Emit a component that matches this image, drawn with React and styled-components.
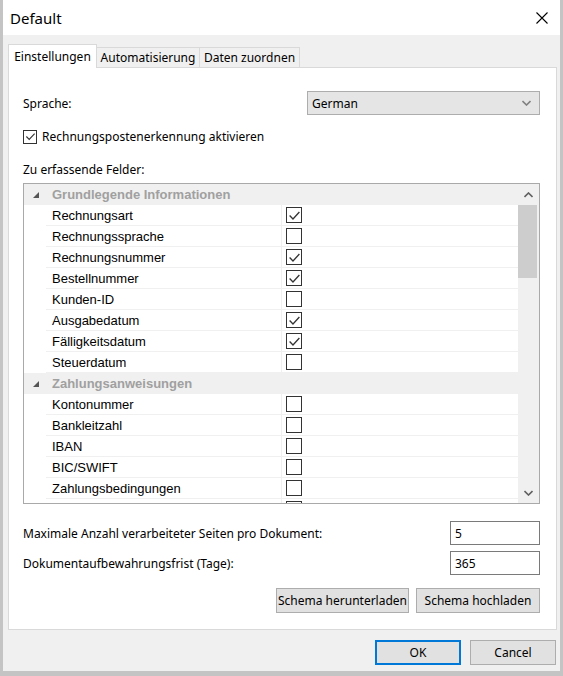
import React from 'react'
import styled, { createGlobalStyle } from 'styled-components'

const GlobalStyle = createGlobalStyle`
  html, body { margin: 0; padding: 0; background: #c4c4c4; }
  body {
    font-family: "Noto Sans", "Open Sans", sans-serif;
    font-size: 12px;
    color: #000;
  }
  * { box-sizing: border-box; }
`

const LIST = `"Liberation Sans", Arial, sans-serif`

const Window = styled.div`
  width: 563px;
  height: 676px;
  display: flex;
  flex-direction: column;
  background: #f0f0f0;
  border: 3px solid #c4c4c4;
  border-top: 0;
  border-bottom-width: 5px;
`

const TitleBar = styled.div`
  height: 35px;
  background: #fff;
  display: flex;
  align-items: center;
  justify-content: space-between;
  padding: 0 12px 0 7px;
  font-size: 15px;
`

const CloseIcon = () => (
  <svg width="12" height="12" viewBox="0 0 12 12">
    <path d="M0.5 0.5 L11.5 11.5 M11.5 0.5 L0.5 11.5" stroke="#000" strokeWidth="1.1" />
  </svg>
)

const Body = styled.div`
  flex: 1;
  display: flex;
  flex-direction: column;
  padding: 9px 0 0 5px;
`

const TabStrip = styled.div`
  display: flex;
  align-items: flex-end;
  height: 24px;
  position: relative;
  z-index: 1;
  margin-bottom: -1px;
`

const Tab = styled.div`
  width: ${p => p.$w}px;
  height: ${p => (p.$active ? 24 : 21)}px;
  display: flex;
  align-items: center;
  justify-content: center;
  white-space: nowrap;
  background: ${p => (p.$active ? '#fff' : '#f0f0f0')};
  border: 1px solid #d9d9d9;
  border-bottom: ${p => (p.$active ? '0' : '1px solid #d9d9d9')};
  margin-left: ${p => (p.$active ? 0 : -1)}px;
  &:first-child { margin-left: 0; }
`

const Panel = styled.div`
  width: 549px;
  height: 563px;
  background: #fff;
  border: 1px solid #d9d9d9;
  padding: 23px 16px 0 14px;
  display: flex;
  flex-direction: column;
`

const FieldRow = styled.div`
  display: flex;
  align-items: center;
  justify-content: space-between;
  height: 24px;
  margin-top: ${p => p.$mt || 0}px;
`

const Select = styled.div`
  width: 233px;
  height: 24px;
  background: #e5e5e5;
  border: 1px solid #adadad;
  display: flex;
  align-items: center;
  justify-content: space-between;
  padding: 0 8px 0 4px;
`

const CheckRow = styled.label`
  display: flex;
  align-items: center;
  gap: 5px;
  margin-top: 13px;
  height: 17px;
`

const Box = styled.span`
  width: ${p => p.$size}px;
  height: ${p => p.$size}px;
  border: 1px solid #333;
  background: #fff;
  display: inline-flex;
  align-items: center;
  justify-content: center;
  flex: none;
`

const CheckMark = ({ size }) => (
  <svg width={size} height={size} viewBox="0 0 12 12">
    <path d="M1.5 6 L4.6 9.2 L10.5 2.8" stroke="#333" strokeWidth="1.2" fill="none" />
  </svg>
)

const CheckBox = ({ checked, size = 14 }) => (
  <Box $size={size}>{checked && <CheckMark size={size - 3} />}</Box>
)

const Caption = styled.div`
  margin-top: 15px;
  height: 18px;
  display: flex;
  align-items: center;
`

const ListBox = styled.div`
  margin-top: 5px;
  width: 517px;
  height: 321px;
  flex: none;
  border: 1px solid #a9a9a9;
  display: flex;
  overflow: hidden;
  font-family: ${LIST};
  font-size: 13px;
`

const Rows = styled.div`
  flex: 1;
  display: flex;
  flex-direction: column;
  overflow: hidden;
`

const GroupRow = styled.div`
  flex: none;
  height: 21px;
  background: #f0f0f0;
  display: flex;
  align-items: center;
  font-weight: bold;
  color: #a0a0a0;
`

const Expander = styled.span`
  width: 28px;
  padding-left: 9px;
  display: flex;
  align-items: center;
`

const ItemRow = styled.div`
  flex: none;
  height: 21px;
  margin-left: 22px;
  display: flex;
  border-bottom: 1px solid #f0f0f0;
`

const ItemLabel = styled.div`
  width: 236px;
  padding-left: 6px;
  display: flex;
  align-items: center;
  border-right: 1px solid #f0f0f0;
  color: #000;
`

const ItemCheck = styled.div`
  padding-left: 4px;
  display: flex;
  align-items: center;
`

const ScrollBar = styled.div`
  width: 21px;
  flex: none;
  background: #f0f0f0;
  display: flex;
  flex-direction: column;
  align-items: center;
`

const ScrollArrow = styled.div`
  height: 21px;
  width: 100%;
  display: flex;
  align-items: center;
  justify-content: center;
`

const Thumb = styled.div`
  width: 19px;
  height: 73px;
  background: #cdcdcd;
  margin-right: 2px;
`

const Track = styled.div`
  flex: 1;
  width: 100%;
  display: flex;
  flex-direction: column;
  align-items: flex-start;
`

const Input = styled.div`
  width: 90px;
  height: 24px;
  border: 1px solid #7a7a7a;
  display: flex;
  align-items: center;
  padding-left: 4px;
`

const ButtonRow = styled.div`
  display: flex;
  justify-content: flex-end;
  gap: 7px;
  margin-top: 13px;
`

const Button = styled.div`
  height: 25px;
  width: ${p => p.$w}px;
  display: flex;
  align-items: center;
  justify-content: center;
  white-space: nowrap;
  background: #e1e1e1;
  border: ${p => (p.$primary ? '2px solid #0078d7' : '1px solid #adadad')};
`

const Footer = styled.div`
  display: flex;
  justify-content: flex-end;
  gap: 9px;
  padding: 10px 4px 0 0;
`

const Chevron = ({ up, color = '#606060', w = 9 }) => (
  <svg width={w} height="6" viewBox="0 0 9 6">
    <path d={up ? 'M0.5 5 L4.5 1 L8.5 5' : 'M0.5 1 L4.5 5 L8.5 1'} stroke={color} strokeWidth="1.6" fill="none" />
  </svg>
)

const Triangle = () => (
  <svg width="6" height="6" viewBox="0 0 6 6">
    <polygon points="6,0 6,6 0,6" fill="#555" />
  </svg>
)

const groups = [
  {
    title: 'Grundlegende Informationen',
    items: [
      ['Rechnungsart', true],
      ['Rechnungssprache', false],
      ['Rechnungsnummer', true],
      ['Bestellnummer', true],
      ['Kunden-ID', false],
      ['Ausgabedatum', true],
      ['Fälligkeitsdatum', true],
      ['Steuerdatum', false],
    ],
  },
  {
    title: 'Zahlungsanweisungen',
    items: [
      ['Kontonummer', false],
      ['Bankleitzahl', false],
      ['IBAN', false],
      ['BIC/SWIFT', false],
      ['Zahlungsbedingungen', false],
      ['', false],
    ],
  },
]

const App = () => (
  <>
    <GlobalStyle />
    <Window>
      <TitleBar>
        <span>Default</span>
        <CloseIcon />
      </TitleBar>
      <Body>
        <TabStrip>
          <Tab $active $w={89}>Einstellungen</Tab>
          <Tab $w={104}>Automatisierung</Tab>
          <Tab $w={101}>Daten zuordnen</Tab>
        </TabStrip>
        <Panel>
          <FieldRow>
            <span>Sprache:</span>
            <Select>
              <span>German</span>
              <Chevron color="#808080" w={9} />
            </Select>
          </FieldRow>
          <CheckRow>
            <CheckBox checked size={14} />
            <span>Rechnungspostenerkennung aktivieren</span>
          </CheckRow>
          <Caption>Zu erfassende Felder:</Caption>
          <ListBox>
            <Rows>
              {groups.map(g => (
                <React.Fragment key={g.title}>
                  <GroupRow>
                    <Expander><Triangle /></Expander>
                    {g.title}
                  </GroupRow>
                  {g.items.map(([name, checked], i) => (
                    <ItemRow key={name || i}>
                      <ItemLabel>{name}</ItemLabel>
                      <ItemCheck><CheckBox checked={checked} size={16} /></ItemCheck>
                    </ItemRow>
                  ))}
                </React.Fragment>
              ))}
            </Rows>
            <ScrollBar>
              <ScrollArrow><Chevron up /></ScrollArrow>
              <Track><Thumb /></Track>
              <ScrollArrow><Chevron /></ScrollArrow>
            </ScrollBar>
          </ListBox>
          <FieldRow $mt={17}>
            <span>Maximale Anzahl verarbeiteter Seiten pro Dokument:</span>
            <Input>5</Input>
          </FieldRow>
          <FieldRow $mt={6}>
            <span>Dokumentaufbewahrungsfrist (Tage):</span>
            <Input>365</Input>
          </FieldRow>
          <ButtonRow>
            <Button $w={133}>Schema herunterladen</Button>
            <Button $w={124}>Schema hochladen</Button>
          </ButtonRow>
        </Panel>
        <Footer>
          <Button $primary $w={86}>OK</Button>
          <Button $w={86}>Cancel</Button>
        </Footer>
      </Body>
    </Window>
  </>
)

export default App
